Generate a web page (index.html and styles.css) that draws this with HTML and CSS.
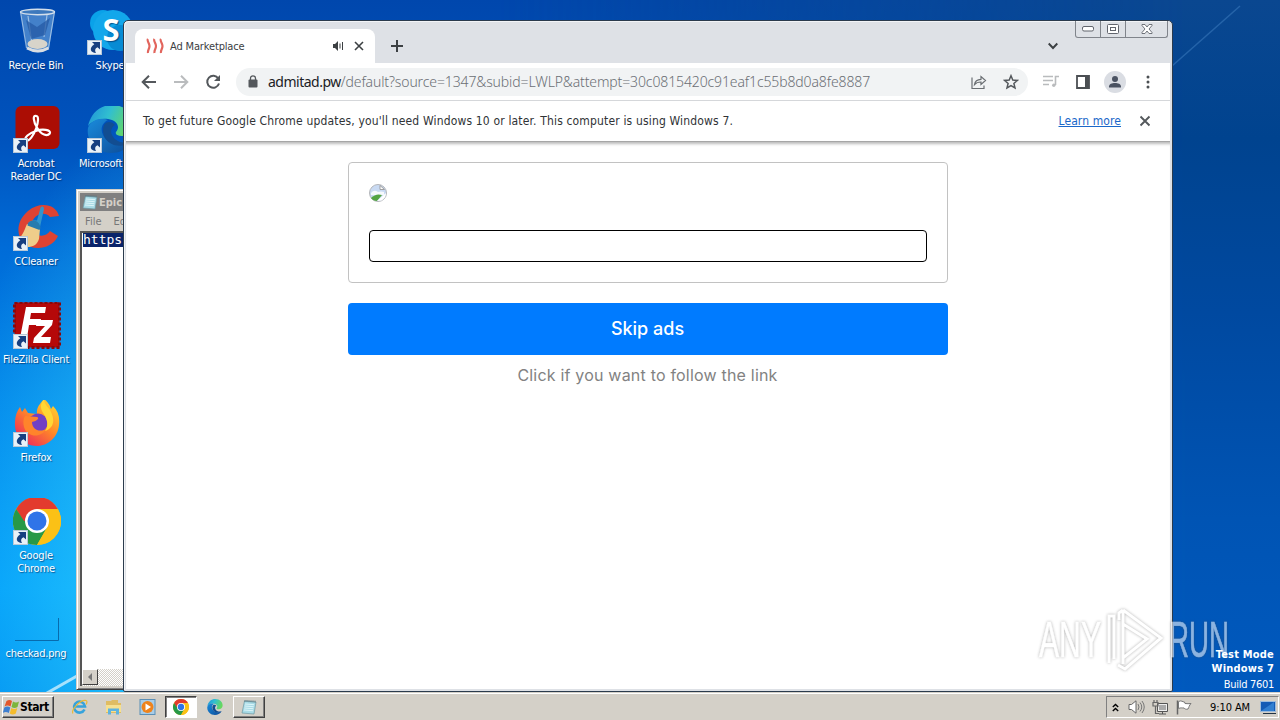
FILE: index.html
```
<!DOCTYPE html>
<html lang="en">
<head>
    <meta charset="UTF-8">
    <meta name="viewport" content="width=device-width, initial-scale=1.0">
    <title>Ad Marketplace</title>
    <link rel="stylesheet" href="styles.css">
</head>
<body>
    <!-- shared symbols -->
    <svg class="defs" width="0" height="0">
        <symbol id="shortcut" viewBox="0 0 15 15">
            <rect x=".5" y=".5" width="14" height="14" fill="#e9f1f8" stroke="#b8c8d8"/>
            <path d="M5 2h8v7.500l-2.500-2.300C7.800 8.500 7.500 10.500 9 13 3.500 13 1.500 8 7.300 4.300z" fill="#173f80"/>
        </symbol>
        <symbol id="chrome-logo" viewBox="0 0 48 48">
            <circle cx="24" cy="24" r="24" fill="#fbc116"/>
            <path d="M24 12h20.800A24 24 0 0 0 3.200 12L13.600 30z" fill="#e33b2e"/>
            <path d="M3.200 12A24 24 0 0 0 24 48L34.400 30 24 24H11z" fill="#279847"/>
            <path d="M34.400 30L24 48A24 24 0 0 0 44.800 12H24z" fill="#fbc116"/>
            <circle cx="24" cy="24" r="12" fill="#fff"/>
            <circle cx="24" cy="24" r="9.500" fill="#2f74e8"/>
        </symbol>
        <symbol id="edge-logo" viewBox="0 0 48 48">
            <defs>
                <linearGradient id="edgeTop" x1="0" y1="0" x2="1" y2="0.300">
                    <stop offset="0" stop-color="#1e8fd8"/>
                    <stop offset=".5" stop-color="#31bfd0"/>
                    <stop offset="1" stop-color="#67d860"/>
                </linearGradient>
                <linearGradient id="edgeBottom" x1="0" y1="0" x2="1" y2="1">
                    <stop offset="0" stop-color="#1a8bdb"/>
                    <stop offset="1" stop-color="#0c4b98"/>
                </linearGradient>
            </defs>
            <path d="M1 21C4 8 13 0 25 0c14 0 22 10 22 19 0 8-6 12-12 12-5 0-7-2-6-4 5-6 0-12-8-13C13 13 5 16 1 21z" fill="url(#edgeTop)"/>
            <path d="M1 23C4 15 14 12 21 15c-6 3-8 9-5 15 4 9 16 13 28 7-5 8-12 11-20 11C9 48-1 36 1 23z" fill="url(#edgeBottom)"/>
            <path d="M17 20c-3 8 1 17 10 20 7 2 13 0 17-3-7 2-16 0-19-7-2-5 0-8 3-10-3-4-9-4-11 0z" fill="#124d91"/>
        </symbol>
        <symbol id="notepad-logo" viewBox="0 0 16 16">
            <path d="M3.500 2L15 3l-2 12L1 14z" fill="#a9dbe6" stroke="#6d98a4" stroke-width=".7"/>
            <path d="M4 5l9 .7M3.700 7l9 .7M3.300 9l9 .7M3 11l9 .7" stroke="#e8fafd" stroke-width=".8"/>
            <path d="M4 1v2M6 1v2M8 1.200v2M10 1.300v2M12 1.400v2M14 1.600v2" stroke="#526f78" stroke-width=".8"/>
        </symbol>
    </svg>

    <div class="desktop">
        <svg class="rays" width="1280" height="693" viewBox="0 0 1280 693">
            <path d="M40 697L84 672" stroke="#d8f4ff" stroke-width="3" opacity=".75"/>
            <path d="M1172 66L1240 6" stroke="#5b9ad8" stroke-width="1.500" opacity=".35"/>
        </svg>

        <div class="icons">
            <div class="icon">
                <svg class="art" viewBox="0 0 48 48">
                    <path d="M7 3L42 3 36 41Q25 48 14 41z" fill="#6fa6dc" fill-opacity=".6"/>
                    <path d="M7.500 4l6 36M41.500 4l-6 36M15 8l4 28M34 7l-3 22" stroke="#c2daf0" stroke-width="1.200" fill="none" opacity=".7"/>
                    <path d="M13 12l11 7 13-9-5 17-14 4z" fill="#2459a4" opacity=".75"/>
                    <ellipse cx="24.500" cy="36" rx="10" ry="5" fill="#d8d4ca"/>
                    <path d="M14 40Q25 46 35.500 40" stroke="#d9dde2" stroke-width="3" fill="none"/>
                    <ellipse cx="24.500" cy="4" rx="17" ry="2.700" fill="#3d79bd" stroke="#d3dfeb" stroke-width="1.400"/>
                </svg>
                <span>Recycle Bin</span>
            </div>
            <div class="icon">
                <svg class="art" viewBox="0 0 48 48">
                    <rect x="2.500" y="0" width="44" height="43" rx="6" fill="#ab0d04"/>
                    <path d="M23.500 10c-4-1.500-3.500 5 .8 12 4 7 10 8.500 12.500 5.500 2-4-8-5-14-2.500-7 2.500-12 6.500-10 9 3 2.500 8-5 10.500-12 2-6 2.500-11.500.2-12z" fill="none" stroke="#fff" stroke-width="2.200"/>
                    <use href="#shortcut" x="0" y="32" width="15" height="15"/>
                </svg>
                <span>Acrobat<br>Reader DC</span>
            </div>
            <div class="icon">
                <svg class="art" viewBox="0 0 48 48">
                    <path d="M46 12C43 0 27-3 15 7 3 17 3 32 11 39c9 8 27 7 34-7l-8-5c-4 6-12 6-15 1-5-7-3-14 3-17 4-2 9-2 12 2z" fill="#de4332"/>
                    <path d="M27 25L27 15 34 3l-3 0" fill="none"/>
                    <path d="M15.500 19L27 23 31 5q0-3-2-2.500-2 .5-2 3l-3 11q-6-1-8.500 2.500z" fill="#3295cc"/>
                    <path d="M14 20l13 5-1 10c-2 6-6 8-12 8-5 0-9-2-12-6 7-3 9-10 12-17z" fill="#efcd8a"/>
                    <path d="M15 19q2-3 7-2.500 5 2 5.500 7.500l-1 2-12-4.500z" fill="#287bae"/>
                    <use href="#shortcut" x="0" y="32" width="15" height="15"/>
                </svg>
                <span>CCleaner</span>
            </div>
            <div class="icon">
                <svg class="art" viewBox="0 0 48 48">
                    <rect x="1.500" y="0.500" width="45" height="45" fill="#b50809" stroke="#8b0709" stroke-width="3" stroke-dasharray="3 2"/>
                    <path d="M13 5h20l-1 6H18l-1 6h11l-1 6H16l-2 13H7z" fill="#fff"/>
                    <path d="M24 18h16l-1 5-11 12h10l-1 6H20l1-5 11-12h-9z" fill="#fff"/>
                    <use href="#shortcut" x="0" y="32" width="15" height="15"/>
                </svg>
                <span>FileZilla Client</span>
            </div>
            <div class="icon">
                <svg class="art" viewBox="0 0 48 48">
                    <defs>
                        <linearGradient id="fox" x1="1" y1="0" x2=".2" y2="1">
                            <stop offset="0" stop-color="#ffe533"/>
                            <stop offset=".5" stop-color="#ff8a27"/>
                            <stop offset="1" stop-color="#ed245d"/>
                        </linearGradient>
                    </defs>
                    <path d="M31-1c5 4 6 7 7 10l2-3c5 5 7 11 6 19-1 12-11 21-22 21C10 46 1 36 2 22 2 16 4 11 7 7l2 5 3-4 3 5 9 1c-1-7 4-11 7-15z" fill="url(#fox)"/>
                    <circle cx="25" cy="23" r="9.500" fill="#7140c4"/>
                    <path d="M12 16l12 1c3 1 0 4-5 5 0 7 7 11 14 7-4 9-19 9-22-2-1-4-1-8 1-11z" fill="#ff842b"/>
                    <path d="M31-1c-6 8-2 12 1 17 3 6 3 11 0 15 9-3 10-11 6-19-2-5-7-7-7-13z" fill="#ffd735"/>
                    <use href="#shortcut" x="0" y="32" width="15" height="15"/>
                </svg>
                <span>Firefox</span>
            </div>
            <div class="icon">
                <svg class="art" viewBox="0 0 48 48">
                    <use href="#chrome-logo" y="-1" width="48" height="48"/>
                    <use href="#shortcut" x="0" y="32" width="15" height="15"/>
                </svg>
                <span>Google<br>Chrome</span>
            </div>
            <div class="icon">
                <svg class="art" viewBox="0 0 48 48">
                    <path d="M2 44.500H45.500V22" fill="none" stroke="#086bad"/>
                </svg>
                <span>checkad.png</span>
            </div>
            <div class="icon">
                <svg class="art" viewBox="0 0 48 48">
                    <circle cx="16" cy="15" r="13" fill="#0aa2e9"/>
                    <circle cx="26" cy="22" r="20" fill="#12a7eb"/>
                    <circle cx="33" cy="30" r="13" fill="#078bd4"/>
                    <text x="24" y="33" class="skype-s">S</text>
                    <use href="#shortcut" x="0" y="32" width="15" height="15"/>
                </svg>
                <span>Skype</span>
            </div>
            <div class="icon">
                <svg class="art" viewBox="0 0 48 48">
                    <use href="#edge-logo" y="-1" width="48" height="48"/>
                    <use href="#shortcut" x="0" y="32" width="15" height="15"/>
                </svg>
                <span class="edge-name">Microsoft Edge</span>
            </div>
        </div>

        <!-- notepad, mostly hidden behind the browser -->
        <div class="notepad">
            <div class="np-title"><svg width="16" height="16"><use href="#notepad-logo"/></svg>Epic</div>
            <div class="np-menu"><span>File</span><span>Edit</span></div>
            <div class="np-text"><span>https://</span></div>
            <div class="np-scroll">
                <div class="np-arrow"><svg width="8" height="8" viewBox="0 0 8 8"><path d="M6 0v8L2 4z" fill="#777"/></svg></div>
            </div>
        </div>

        <!-- browser -->
        <div class="browser">
            <div class="tabstrip">
                <div class="tab">
                    <svg class="favicon" width="18" height="16" viewBox="0 0 18 16" fill="none" stroke="#e2655d" stroke-width="2.200">
                        <path d="M2 1c-1.500 2 1.500 4 1.500 7S1.500 12 2 15M8.500 1c-1.500 2 1.500 4 1.500 7s-2 4-1.500 7M15 1c-1.500 2 1.500 4 1.500 7s-2 4-1.500 7"/>
                    </svg>
                    <span class="tab-name">Ad Marketplace</span>
                    <svg width="12" height="12" viewBox="0 0 12 12">
                        <path d="M1 4h2l3-3v10L3 8H1z" fill="#3c4043"/>
                        <path d="M8 3.500v5M10.500 2v8" stroke="#3c4043" fill="none"/>
                    </svg>
                    <svg class="tab-close" width="10" height="10" viewBox="0 0 10 10"><path d="M1 1l8 8M9 1l-8 8" stroke="#3c4043" stroke-width="1.600"/></svg>
                </div>
                <svg class="new-tab" width="12" height="12" viewBox="0 0 12 12"><path d="M6 0v12M0 6h12" stroke="#3c4043" stroke-width="2"/></svg>
                <svg class="tab-search" width="10" height="8" viewBox="0 0 10 8"><path d="M.7 1.500L5 6l4.300-4.500" fill="none" stroke="#3c4043" stroke-width="1.900"/></svg>
                <div class="win-buttons">
                    <div><svg width="12" height="6" viewBox="0 0 12 6"><rect x=".5" y=".5" width="11" height="4.500" rx="1.500" fill="#fff" stroke="#61656d"/></svg></div>
                    <div><svg width="12" height="10" viewBox="0 0 12 10"><rect x=".5" y=".5" width="11" height="9" rx="1" fill="#fff" stroke="#61656d"/><rect x="3.500" y="3.500" width="5" height="3" fill="#fff" stroke="#61656d"/></svg></div>
                    <div class="wide"><svg width="12" height="10" viewBox="0 0 12 10"><path d="M1 .5h3l2 2.500L8 .5h3v1L8 5l3 3.500v1H8L6 7 4 9.500H1v-1L4 5 1 1.500z" fill="#fff" stroke="#61656d" stroke-width=".9"/></svg></div>
                </div>
            </div>

            <div class="toolbar">
                <svg class="back" width="16" height="14" viewBox="0 0 16 14" fill="none" stroke="#54585c" stroke-width="2"><path d="M15 7H2M8 .8L1.700 7 8 13.200"/></svg>
                <svg class="forward" width="16" height="14" viewBox="0 0 16 14" fill="none" stroke="#babcbe" stroke-width="2"><path d="M1 7h13M8 .8L14.300 7 8 13.200"/></svg>
                <svg class="reload" width="16" height="16" viewBox="0 0 16 16"><path d="M13.300 4.500A6 6 0 1 0 14 9.500" fill="none" stroke="#54585c" stroke-width="2"/><path d="M15 1v6H9z" fill="#54585c"/></svg>
                <div class="omnibox">
                    <svg width="10" height="13" viewBox="0 0 10 13"><rect x="0.500" y="4.500" width="9" height="8" rx="1" fill="#54585c"/><path d="M2.500 5V3.300a2.500 2.500 0 0 1 5 0V5" fill="none" stroke="#54585c" stroke-width="1.300"/></svg>
                    <div class="url"><span class="host">admitad.pw</span><span class="path">/default?source=1347&amp;subid=LWLP&amp;attempt=30c0815420c91eaf1c55b8d0a8fe8887</span></div>
                    <svg class="share" width="16" height="14" viewBox="0 0 16 14" fill="none" stroke="#6a6e72" stroke-width="1.200"><path d="M1 2.500v11h12v-3M3.500 9.500C4 6 6.500 4.500 10 4.300V1.500L14.500 5.500 10 9.500V7C7 7 5 7.800 3.500 9.500z"/></svg>
                    <svg width="16" height="16" viewBox="0 0 16 16"><path d="M8 1.700l1.800 4.300 4.600.4-3.500 3 1.100 4.500L8 11.500l-4 2.400 1.100-4.500-3.500-3L6.200 6z" fill="none" stroke="#54585c" stroke-width="1.500"/></svg>
                </div>
                <svg class="media" width="16" height="13" viewBox="0 0 16 13" fill="none" stroke="#b9bbbd" stroke-width="1.600"><path d="M0 1.500h10M0 5.500h10M0 9.500h6M12.500 10V1.500H16"/><circle cx="10.800" cy="10.300" r="1.700" fill="#b9bbbd" stroke="none"/></svg>
                <svg class="panel" width="14" height="14" viewBox="0 0 14 14"><path d="M1 1h12v12H1z" fill="none" stroke="#4b4f53" stroke-width="1.800"/><path d="M9 1H13v12H9z" fill="#4b4f53"/></svg>
                <svg class="avatar" width="22" height="22" viewBox="0 0 22 22"><circle cx="11" cy="11" r="11" fill="#dadde3"/><circle cx="11" cy="8" r="3" fill="#4b5362"/><path d="M5 16.500v-1C5 13 8 12 11 12s6 1 6 3.500v1z" fill="#4b5362"/></svg>
                <svg class="dots" width="4" height="14" viewBox="0 0 4 14" fill="#4b4f53"><circle cx="2" cy="2" r="1.500"/><circle cx="2" cy="7" r="1.500"/><circle cx="2" cy="12" r="1.500"/></svg>
            </div>

            <div class="infobar">
                <span class="msg">To get future Google Chrome updates, you'll need Windows 10 or later. This computer is using Windows 7.</span>
                <a href="#">Learn more</a>
                <svg width="12" height="12" viewBox="0 0 12 12"><path d="M1.500 1.500l9 9M10.500 1.500l-9 9" stroke="#54585c" stroke-width="1.900"/></svg>
            </div>

            <div class="page">
                <div class="card">
                    <svg class="broken" width="18" height="18" viewBox="0 0 18 18">
                        <circle cx="9" cy="9" r="8.500" fill="#c9daf3" stroke="#b4b6b9"/>
                        <path d="M2 9q3-4 7-1 3-1 6 0v3H2z" fill="#f6f9fd"/>
                        <path d="M2 14q5-5 11-3l-5 6Q4 17 2 14z" fill="#55a544"/>
                        <path d="M17 9L8 17l4.500-.5q4.500-3 4.500-7.500z" fill="#fff"/>
                        <path d="M11 1.500v4h4.500z" fill="#fff" stroke="#999" stroke-width=".9"/>
                    </svg>
                    <div class="field"></div>
                </div>
                <button class="skip">Skip ads</button>
                <p class="hint">Click if you want to follow the link</p>
            </div>
        </div>
    </div>

    <div class="taskbar">
        <div class="start">
            <svg width="17" height="16" viewBox="0 0 17 16">
                <path d="M3.500 2q3-2 5.500 0L7.500 7.500q-3-2-6 0z" fill="#e3572b"/>
                <path d="M10 2.500q3 2 6 0L14.500 8q-3 2-6 0z" fill="#7db53c"/>
                <path d="M1.300 8.500q3-2 6 0L5.800 14q-3-2-6 0z" fill="#3e7fd0"/>
                <path d="M8.300 9q3 2 6 0l-1.500 5.500q-3 2-6 0z" fill="#f4bc2c"/>
            </svg>
            Start
        </div>
        <div class="task"><svg width="17" height="16" viewBox="0 0 17 16"><path d="M13.500 10.500A5.500 5.500 0 1 1 14 7.500H4" fill="none" stroke="#36a3dc" stroke-width="2.600"/><path d="M2 14.500C-1 12 9 .5 15 1.500c1.500.5 1 2.500 0 4" fill="none" stroke="#e8b936" stroke-width="1.200"/></svg></div>
        <div class="task"><svg width="17" height="16" viewBox="0 0 17 16"><path d="M1 2h5l1-1h6v3h3v10H1z" fill="#dfbc62"/><path d="M1 6h15v7H1z" fill="#f6e08f"/><path d="M3 9.500h11v6h-3V12H6v3.500H3z" fill="#5fb3de"/></svg></div>
        <div class="task"><svg width="17" height="16" viewBox="0 0 17 16"><rect x="1" y=".5" width="15" height="15" fill="#a8cde8" stroke="#5a8fb6"/><circle cx="8.500" cy="8" r="6" fill="#ee831c"/><path d="M6.500 4.500v7l5.500-3.500z" fill="#fff"/></svg></div>
        <div class="task active"><svg width="16" height="16"><use href="#chrome-logo"/></svg></div>
        <div class="task"><svg width="16" height="16"><use href="#edge-logo"/></svg></div>
        <div class="task raised"><svg width="16" height="16"><use href="#notepad-logo"/></svg></div>
        <div class="tray">
            <svg width="7" height="9" viewBox="0 0 7 9" fill="none" stroke="#000" stroke-width="1.400"><path d="M.8 4l2.700-2.500L6.200 4M.8 8l2.700-2.500L6.200 8"/></svg>
            <svg class="speaker" width="17" height="14" viewBox="0 0 17 14"><path d="M1 4.500h2.500L8 .8v12.400L3.500 9.500H1z" fill="#fff" stroke="#666" stroke-width="1"/><path d="M10 4q2 3 0 6M12 2.500q3.500 4.500 0 9M14 1q4.500 6 0 12" fill="none" stroke="#777"/></svg>
            <svg class="net" width="16" height="15" viewBox="0 0 16 15"><path d="M5.500 3.500h10v8h-10z" fill="#eee" stroke="#555"/><path d="M7 5h7v5H7z" fill="#aaa"/><path d="M7 14h7M10.500 12v2" stroke="#555"/><path d="M1 2.500h5V6H1zM3.500 6v7.500H7M2 0v3M5 0v3" fill="none" stroke="#666" stroke-width="1.200"/></svg>
            <svg class="flag" width="16" height="15" viewBox="0 0 16 15"><path d="M1.500.5v14" stroke="#666" stroke-width="1.500"/><path d="M2.500 1.500c3-1.500 4 .5 6 .5l.5 1.500c2 .5 4 0 6 0-2 2-2 4-3 5.500-2 .7-3 0-4-1-2 0-3-.5-5.500.5z" fill="#fff" stroke="#777"/></svg>
            <span class="clock">9:10 AM</span>
            <svg class="show-desktop" width="16" height="13" viewBox="0 0 16 13"><path d="M.5.500h15v10H.5z" fill="#155bb5" stroke="#9dbbdc"/><path d="M1 10L14 1v9z" fill="#3f8fdd" opacity=".7"/><path d="M3 12.500h13" stroke="#234"/></svg>
        </div>
    </div>

    <!-- watermark -->
    <svg class="watermark" width="210" height="76" viewBox="0 0 210 76">
        <text x="5" y="55" textLength="62" lengthAdjust="spacingAndGlyphs">ANY</text>
        <text x="135" y="55" textLength="60" lengthAdjust="spacingAndGlyphs">RUN</text>
        <path d="M75 61V14h5v43M89 9v53M89 8l38 28-36 31-7-4M89 8l-4 3v7M89 22l24 15-24 19z"/>
    </svg>

    <div class="build">
        <b>Test Mode</b>
        <b>Windows 7</b>
        <span>Build 7601</span>
    </div>
</body>
</html>
```
FILE: styles.css
```
* {
    box-sizing: border-box;
}

body {
    margin: 0;
    width: 1280px;
    height: 720px;
    position: relative;
    overflow: hidden;
    display: flex;
    flex-direction: column;
    font-family: "DejaVu Sans Condensed", "DejaVu Sans", sans-serif;
    font-stretch: condensed;
    font-size: 11px;
}

svg {
    display: block;
    flex: none;
}

.defs {
    position: absolute;
}

/* desktop */
.desktop {
    flex: 1;
    position: relative;
    overflow: hidden;
    background:
        radial-gradient(ellipse 300px 480px at 240px 560px, rgba(60, 225, 255, 0.9), rgba(20, 160, 245, 0) 100%),
        linear-gradient(#0047ad, #0053bd 20%, #006cd8 36%, #0084ea 58%, #009bfa 85%, #0092f2);
}

.desktop::before {
    content: "";
    position: absolute;
    top: 0;
    right: 0;
    width: 780px;
    height: 100%;
    background: linear-gradient(#0a4790, #00438f 20%, #0049a0 45%, #0054b4 75%, #0059be);
    -webkit-mask-image: linear-gradient(to right, transparent, #000 88%);
    mask-image: linear-gradient(to right, transparent, #000 88%);
}

.rays {
    position: absolute;
    top: 0;
    left: 0;
}

.icons {
    position: absolute;
    top: 8px;
    left: -1px;
    height: 686px;
    display: grid;
    grid-template-rows: repeat(7, 98px);
    grid-auto-columns: 74px;
    grid-auto-flow: column;
}

.icon {
    display: flex;
    flex-direction: column;
    align-items: center;
    gap: 3px;
    color: #fff;
    line-height: 13px;
    text-align: center;
    letter-spacing: -0.2px;
    text-shadow: 1px 1px 1px rgba(0, 30, 80, 0.6);
    white-space: nowrap;
}

.art {
    width: 48px;
    height: 48px;
    margin-left: 2px;
}

.edge-name {
    margin-left: 8px;
}

.skype-s {
    font: bold 31px "Open Sans", sans-serif;
    fill: #fff;
    text-anchor: middle;
}

.build {
    position: absolute;
    right: 6px;
    top: 648px;
    display: flex;
    flex-direction: column;
    text-align: right;
    line-height: 14px;
    color: #fff;
    letter-spacing: 0.2px;
}

.build span {
    line-height: 18px;
    letter-spacing: -0.3px;
}

/* notepad */
.notepad {
    position: absolute;
    left: 76px;
    top: 189px;
    width: 300px;
    height: 501px;
    padding: 3px;
    display: flex;
    flex-direction: column;
    background: #d4d0c8;
    border: 1px solid #d4d0c8;
    border-bottom-color: #404040;
    box-shadow: inset 1px 1px #fff, inset 0 -1px #808080;
}

.np-title {
    height: 18px;
    display: flex;
    align-items: center;
    gap: 1px;
    padding-left: 2px;
    background: #808080;
    color: #d4d0c8;
    font-weight: bold;
}

.np-menu {
    height: 20px;
    display: flex;
    align-items: center;
    gap: 12px;
    padding-left: 5px;
    color: #777;
}

.np-text {
    flex: 1;
    padding: 0 1px;
    background: #fff;
    border: 1px solid #808080;
    border-width: 2px 0 0 2px;
    border-color: #555;
    font: 13px/14px "DejaVu Sans Mono", monospace;
}

.np-text span {
    display: block;
    background: #0a246a;
    color: #fff;
}

.np-scroll {
    height: 17px;
    border-left: 2px solid #555;
    background: repeating-conic-gradient(#fff 0 25%, #d4d0c8 0 50%) 0 0 / 2px 2px;
}

.np-arrow {
    width: 16px;
    height: 16px;
    display: grid;
    place-items: center;
    background: #d4d0c8;
    border: 1px solid;
    border-color: #fff #404040 #404040 #fff;
}

/* browser window */
.browser {
    position: absolute;
    left: 123px;
    top: 20px;
    width: 1050px;
    height: 672px;
    display: flex;
    flex-direction: column;
    background: #dee1e6;
    border: 1px solid #2b3b4d;
    border-radius: 5px 5px 2px 2px;
    padding: 0 2px 2px 2px;
    overflow: hidden;
    box-shadow: inset 1px 1px #f2f4f7;
}

.tabstrip {
    height: 42px;
    display: flex;
    align-items: flex-start;
    padding-left: 9px;
}

.tab {
    width: 240px;
    height: 34px;
    margin-top: 8px;
    padding: 0 11px;
    display: flex;
    align-items: center;
    background: #fff;
    border-radius: 8px 8px 0 0;
    color: #3c4043;
}

.tab-name {
    flex: 1;
    margin-left: 6px;
    letter-spacing: -0.15px;
}

.tab-close {
    margin-left: 10px;
}

.new-tab {
    margin: 19px 0 0 16px;
}

.tab-search {
    margin: 21px 17px 0 auto;
}

.win-buttons {
    display: flex;
    height: 17px;
    margin-right: 2px;
    border: 1px solid #80848b;
    border-top: 0;
    border-radius: 0 0 3px 3px;
}

.win-buttons div {
    width: 25px;
    display: grid;
    place-items: center;
    border-right: 1px solid #80848b;
}

.win-buttons .wide {
    width: 41px;
    border: 0;
}

.toolbar {
    height: 38px;
    display: flex;
    align-items: center;
    padding: 0 20px 0 15px;
    background: #fff;
    border-bottom: 1px solid #d5d7da;
}

.forward {
    margin-left: 16px;
}

.reload {
    margin-left: 16px;
}

.omnibox {
    width: 792px;
    height: 28px;
    margin-left: 15px;
    padding: 0 9px 0 12px;
    display: flex;
    align-items: center;
    background: #f1f3f4;
    border-radius: 14px;
}

.url {
    flex: 1;
    margin-left: 10px;
    font: 14px "Noto Sans", sans-serif;
    white-space: nowrap;
}

.host {
    color: #202124;
    letter-spacing: -0.5px;
}

.path {
    color: #6b6f74;
    font-weight: 300;
    letter-spacing: -0.12px;
}

.share {
    margin-right: 16px;
}

.media {
    margin-left: 15px;
}

.panel {
    margin-left: 17px;
}

.avatar {
    margin-left: 14px;
}

.dots {
    margin-left: 20px;
}

.infobar {
    height: 41px;
    display: flex;
    align-items: center;
    padding: 0 19px 0 17px;
    background: #fff;
    border-bottom: 1px solid #a6a6a6;
    color: #303336;
    font-size: 12px;
}

.msg {
    flex: 1;
    white-space: nowrap;
    letter-spacing: 0.16px;
}

.infobar a {
    margin-right: 18px;
    color: #1a67c9;
    letter-spacing: 0.1px;
}

.page {
    flex: 1;
    display: flex;
    flex-direction: column;
    align-items: center;
    background: #fff;
    padding: 20px 1px 0 0;
    box-shadow: inset 0 4px 3px -2px #bbb;
    font-family: Inter, sans-serif;
    font-stretch: normal;
}

.card {
    width: 600px;
    height: 121px;
    padding: 21px 20px 20px;
    border: 1px solid #c2c2c2;
    border-radius: 4px;
    display: flex;
    flex-direction: column;
    justify-content: space-between;
}

.field {
    height: 32px;
    border: 1px solid #000;
    border-radius: 4px;
}

.skip {
    width: 600px;
    height: 52px;
    margin-top: 20px;
    padding: 0 0 2px;
    border: 0;
    border-radius: 4px;
    background: #007bff;
    color: #fff;
    font: 500 18px Inter, sans-serif;
}

.hint {
    margin: 10px 0 0;
    font-size: 16px;
    line-height: 20px;
    letter-spacing: 0.2px;
    color: #828282;
}

/* taskbar */
.taskbar {
    height: 28px;
    display: flex;
    align-items: center;
    padding: 1px 1px 0 2px;
    background: #d4d0c8;
    border-top: 1px solid #d4d0c8;
    box-shadow: inset 0 1px #fff;
}

.start,
.raised {
    border: 1px solid;
    border-color: #fff #404040 #404040 #fff;
    box-shadow: inset -1px -1px #808080;
}

.start {
    width: 52px;
    height: 22px;
    margin-right: 9px;
    display: flex;
    align-items: center;
    font-size: 12px;
    font-weight: bold;
    letter-spacing: -0.4px;
}

.task {
    width: 32px;
    height: 22px;
    margin-right: 2px;
    display: grid;
    place-items: center;
}

.active {
    background: #fff;
    border: 1px solid;
    border-color: #404040 #fff #fff #404040;
    box-shadow: inset 1px 1px #808080;
}

.tray {
    margin-left: auto;
    width: 173px;
    height: 22px;
    padding: 0 2px 0 5px;
    display: flex;
    align-items: center;
    border: 1px solid;
    border-color: #808080 #fff #fff #808080;
}

.speaker {
    margin-left: 9px;
}

.net {
    margin-left: 7px;
}

.flag {
    margin-left: 8px;
}

.clock {
    margin-left: auto;
    letter-spacing: -0.1px;
}

.show-desktop {
    margin-left: 10px;
}

.watermark {
    position: absolute;
    left: 1034px;
    top: 602px;
    opacity: 0.55;
    filter: drop-shadow(0 0 1.5px rgba(70, 70, 70, 0.75));
}

.watermark text {
    font: 50px "Liberation Sans Narrow", "Liberation Sans", sans-serif;
    fill: #fff;
    stroke: #fff;
    stroke-width: 0.6;
}

.watermark path {
    fill: none;
    stroke: #fff;
    stroke-width: 3;
}
```
